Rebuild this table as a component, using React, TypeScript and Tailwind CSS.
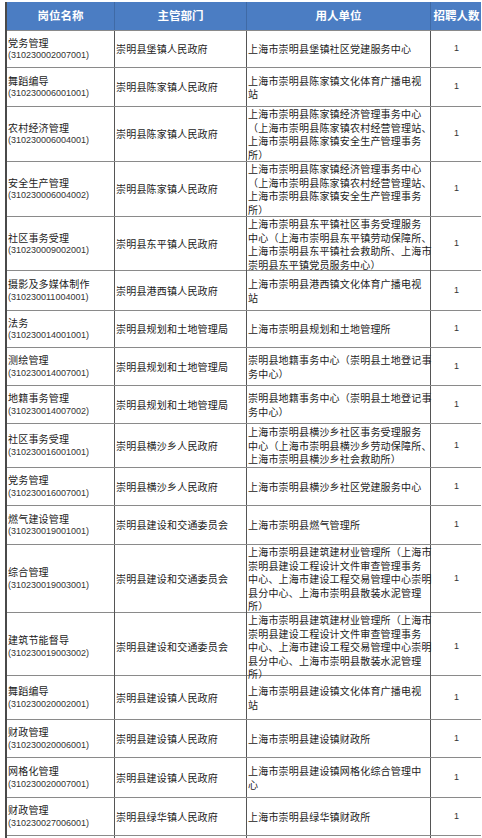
import React from 'react';

type Row = {
  name: string;
  code: string;
  dept: string;
  unit: string[];
  h: number;
};

const chen3 = [
  '上海市崇明县陈家镇经济管理事务中心',
  '（上海市崇明县陈家镇农村经营管理站、',
  '上海市崇明县陈家镇安全生产管理事务',
  '所）',
];

const jian = [
  '上海市崇明县建筑建材业管理所（上海市',
  '崇明县建设工程设计文件审查管理事务',
  '中心、上海市建设工程交易管理中心崇明',
  '县分中心、上海市崇明县散装水泥管理',
  '所）',
];

const diji = ['崇明县地籍事务中心（崇明县土地登记事', '务中心）'];

const rows: Row[] = [
  { name: '党务管理', code: '(310230002007001)', dept: '崇明县堡镇人民政府', unit: ['上海市崇明县堡镇社区党建服务中心'], h: 37 },
  { name: '舞蹈编导', code: '(310230006001001)', dept: '崇明县陈家镇人民政府', unit: ['上海市崇明县陈家镇文化体育广播电视', '站'], h: 39 },
  { name: '农村经济管理', code: '(310230006004001)', dept: '崇明县陈家镇人民政府', unit: chen3, h: 55 },
  { name: '安全生产管理', code: '(310230006004002)', dept: '崇明县陈家镇人民政府', unit: chen3, h: 55 },
  {
    name: '社区事务受理',
    code: '(310230009002001)',
    dept: '崇明县东平镇人民政府',
    unit: [
      '上海市崇明县东平镇社区事务受理服务',
      '中心（上海市崇明县东平镇劳动保障所、',
      '上海市崇明县东平镇社会救助所、上海市',
      '崇明县东平镇党员服务中心）',
    ],
    h: 54,
  },
  { name: '摄影及多媒体制作', code: '(310230011004001)', dept: '崇明县港西镇人民政府', unit: ['上海市崇明县港西镇文化体育广播电视', '站'], h: 40 },
  { name: '法务', code: '(310230014001001)', dept: '崇明县规划和土地管理局', unit: ['上海市崇明县规划和土地管理所'], h: 37 },
  { name: '测绘管理', code: '(310230014007001)', dept: '崇明县规划和土地管理局', unit: diji, h: 38 },
  { name: '地籍事务管理', code: '(310230014007002)', dept: '崇明县规划和土地管理局', unit: diji, h: 38 },
  {
    name: '社区事务受理',
    code: '(310230016001001)',
    dept: '崇明县横沙乡人民政府',
    unit: [
      '上海市崇明县横沙乡社区事务受理服务',
      '中心（上海市崇明县横沙乡劳动保障所、',
      '上海市崇明县横沙乡社会救助所）',
    ],
    h: 44,
  },
  { name: '党务管理', code: '(310230016007001)', dept: '崇明县横沙乡人民政府', unit: ['上海市崇明县横沙乡社区党建服务中心'], h: 38 },
  { name: '燃气建设管理', code: '(310230019001001)', dept: '崇明县建设和交通委员会', unit: ['上海市崇明县燃气管理所'], h: 39 },
  { name: '综合管理', code: '(310230019003001)', dept: '崇明县建设和交通委员会', unit: jian, h: 68 },
  { name: '建筑节能督导', code: '(310230019003002)', dept: '崇明县建设和交通委员会', unit: jian, h: 63 },
  { name: '舞蹈编导', code: '(310230020002001)', dept: '崇明县建设镇人民政府', unit: ['上海市崇明县建设镇文化体育广播电视', '站'], h: 44 },
  { name: '财政管理', code: '(310230020006001)', dept: '崇明县建设镇人民政府', unit: ['上海市崇明县建设镇财政所'], h: 38 },
  { name: '网格化管理', code: '(310230020007001)', dept: '崇明县建设镇人民政府', unit: ['上海市崇明县建设镇网格化综合管理中', '心'], h: 40 },
  { name: '财政管理', code: '(310230027006001)', dept: '崇明县绿华镇人民政府', unit: ['上海市崇明县绿华镇财政所'], h: 38 },
];

const cols = 'grid grid-cols-[108px_132px_184px_51px]';
const cjk = "font-['Noto_Sans_CJK_SC',sans-serif]";

export default function App() {
  return (
    <div className={`h-[838px] overflow-hidden bg-white pl-[5px] pt-[2px] ${cjk}`}>
      <div className="w-[476px] border-l-2 border-[#4a4a4a]">
        {/* header */}
        <div className={`${cols} h-[28px] bg-[#4b7dc3] text-[11.5px] font-bold text-white`}>
          <div className="flex items-center justify-center border-r border-[#3f6aa6]">岗位名称</div>
          <div className="flex items-center justify-center border-r border-[#3f6aa6]">主管部门</div>
          <div className="flex items-center justify-center border-r border-[#3f6aa6]">用人单位</div>
          <div className="flex items-center justify-center">招聘人数</div>
        </div>

        {rows.map((r, i) => (
          <div
            key={i}
            className={`${cols} border-t border-[#8a8a8a] text-[10px] leading-[13.5px] tracking-[0.2px] text-[#222]`}
            style={{ height: r.h }}
          >
            <div className="flex flex-col justify-center border-r border-[#555] pl-[1px]">
              <span className="whitespace-nowrap">{r.name}</span>
              <span className="whitespace-nowrap font-['Liberation_Sans',sans-serif] text-[9px] tracking-normal text-[#333]">
                {r.code}
              </span>
            </div>
            <div className="flex items-center whitespace-nowrap border-r border-[#555] pl-[1px]">{r.dept}</div>
            <div className="flex flex-col justify-center border-r border-[#555] pl-[1px]">
              {r.unit.map((line, j) => (
                <span key={j} className="whitespace-nowrap">
                  {line}
                </span>
              ))}
            </div>
            <div className="flex items-center justify-center font-['Liberation_Sans',sans-serif] text-[9px] text-[#333]">
              1
            </div>
          </div>
        ))}

        {/* next row, cut off by the window edge */}
        <div className={`${cols} h-[38px] border-t border-[#8a8a8a]`}>
          <div className="border-r border-[#555]" />
          <div className="border-r border-[#555]" />
          <div className="border-r border-[#555]" />
          <div />
        </div>
      </div>
    </div>
  );
}
